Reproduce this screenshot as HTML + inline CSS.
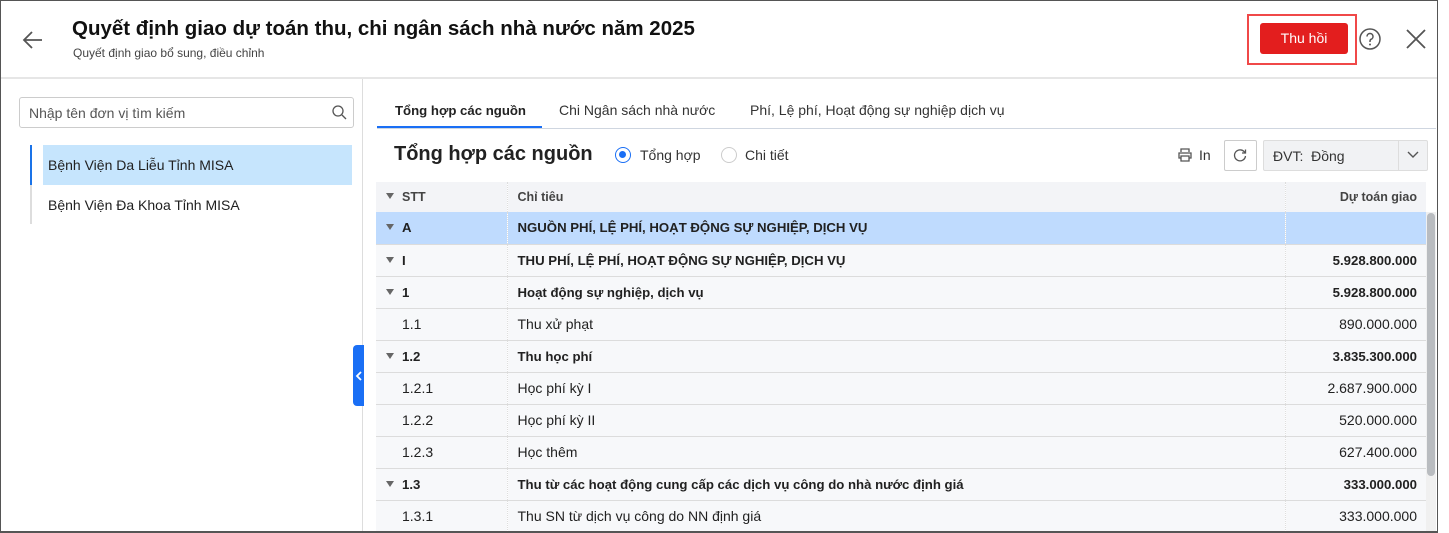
<!DOCTYPE html>
<html><head><meta charset="utf-8"><style>
*{box-sizing:border-box;margin:0;padding:0}
body{width:1449px;height:533px;background:#fff;font-family:"Liberation Sans","Noto Sans CJK SC",sans-serif;color:#212121;position:relative;overflow:hidden}
.frame{position:absolute;left:0;top:0;width:1438px;height:533px;overflow:hidden;background:#fff}
.bord{position:absolute;left:0;top:0;width:1438px;height:533px;border:1px solid #555;border-bottom:2px solid #555;pointer-events:none}
.abs{position:absolute}
.title{left:72px;top:17px;font-size:20.5px;font-weight:bold;color:#111}
.sub{left:73px;top:46px;font-size:12px;color:#444}
.hline{left:0;top:77px;width:1438px;height:2px;background:#e6e6e6}
.vline{left:362px;top:79px;width:1px;height:460px;background:#ddd}
.search{left:19px;top:97px;width:335px;height:31px;border:1px solid #ccc;border-radius:3px;font-size:14px;color:#555;padding:7px 9px}
.sel{left:43px;top:145px;width:309px;height:40px;background:#c6e5fd;font-size:14px;padding:12px 5px}
.item2{left:48px;top:197px;font-size:14px}
.lbar{left:30px;top:145px;width:2px;height:79px;background:#ddd}
.lbar2{left:30px;top:145px;width:2px;height:40px;background:#1a73e8}
.tab{top:102px;font-size:14px;color:#333}
table{position:absolute;left:376px;top:182px;width:1050px;border-collapse:collapse;font-size:14px;table-layout:fixed}
td{height:32px;border-bottom:1px solid #dcdcdc;background:#f7f8fa;padding:0 10px;white-space:nowrap;overflow:hidden}
td:nth-child(1){border-right:1px dotted #ddd}
td:nth-child(2){border-right:1px dotted #ddd}
td:nth-child(3){text-align:right;padding-right:9px}
tr.h td{background:#f3f4f7;height:30px;font-size:12.5px;font-weight:bold;color:#444;border-bottom:none}
tr.b td{font-weight:bold;font-size:13.2px}
tr.a td{background:#bfdbfe}
.tri{display:inline-block;width:0;height:0;border-left:4px solid transparent;border-right:4px solid transparent;border-top:6px solid #666;margin-right:8px;vertical-align:2px}
.ind{padding-left:26px!important}
</style></head><body>
<div class="frame">
<svg class="abs" style="left:22px;top:30px" width="22" height="20" viewBox="0 0 22 20"><path d="M20 10H3M10 2L2 10l8 8" fill="none" stroke="#555" stroke-width="1.8"/></svg>
<div class="abs title">Quyết định giao dự toán thu, chi ngân sách nhà nước năm 2025</div>
<div class="abs sub">Quyết định giao bổ sung, điều chỉnh</div>
<div class="abs" style="left:1247px;top:14px;width:110px;height:51px;border:2px solid #f04848"></div>
<div class="abs" style="left:1260px;top:23px;width:88px;height:31px;background:#e31e1e;border-radius:3px;color:#fff;font-size:14px;text-align:center;line-height:31px">Thu hồi</div>
<svg class="abs" style="left:1358px;top:27px" width="24" height="24" viewBox="0 0 24 24"><circle cx="12" cy="12" r="10" fill="none" stroke="#555" stroke-width="1.5"/><path d="M9 9.5a3 3 0 1 1 4 2.8c-.8.4-1 1-1 2v.7" fill="none" stroke="#555" stroke-width="1.5"/><circle cx="12" cy="17.5" r="1" fill="#555"/></svg>
<svg class="abs" style="left:1405px;top:28px" width="22" height="22" viewBox="0 0 22 22"><path d="M2 2L20 20M20 2L2 20" stroke="#555" stroke-width="1.8"/></svg>
<div class="abs hline"></div>
<div class="abs vline"></div>
<div class="abs search">Nhập tên đơn vị tìm kiếm</div>
<svg class="abs" style="left:331px;top:104px" width="16" height="16" viewBox="0 0 16 16"><circle cx="7" cy="7" r="5" fill="none" stroke="#555" stroke-width="1.3"/><path d="M11 11l4 4" stroke="#555" stroke-width="1.3"/></svg>
<div class="abs lbar"></div><div class="abs lbar2"></div>
<div class="abs sel">Bệnh Viện Da Liễu Tỉnh MISA</div>
<div class="abs item2">Bệnh Viện Đa Khoa Tỉnh MISA</div>
<div class="abs" style="left:353px;top:345px;width:11px;height:61px;background:#1a6ff5;border-radius:4px 0 0 4px"></div>
<svg class="abs" style="left:355px;top:370px" width="8" height="12" viewBox="0 0 8 12"><path d="M6 2L2 6l4 4" fill="none" stroke="#fff" stroke-width="1.8"/></svg>
<div class="abs tab" style="left:395px;font-weight:bold;color:#222;font-size:13.2px;top:103px">Tổng hợp các nguồn</div>
<div class="abs tab" style="left:559px">Chi Ngân sách nhà nước</div>
<div class="abs tab" style="left:750px">Phí, Lệ phí, Hoạt động sự nghiệp dịch vụ</div>
<div class="abs" style="left:377px;top:128px;width:1059px;height:1px;background:#cfd6e0"></div>
<div class="abs" style="left:377px;top:126px;width:165px;height:2px;background:#1a6ff5"></div>
<div class="abs" style="left:394px;top:143px;font-size:20px;font-weight:bold;color:#222">Tổng hợp các nguồn</div>
<div class="abs" style="left:615px;top:147px;width:16px;height:16px;border:1.5px solid #1a6ff5;border-radius:50%"><div style="margin:3px;width:7px;height:7px;border-radius:50%;background:#1a6ff5"></div></div>
<div class="abs" style="left:640px;top:147px;font-size:14px;color:#333">Tổng hợp</div>
<div class="abs" style="left:721px;top:147px;width:16px;height:16px;border:1px solid #ccc;border-radius:50%"></div>
<div class="abs" style="left:745px;top:147px;font-size:14px;color:#333">Chi tiết</div>
<svg class="abs" style="left:1177px;top:147px" width="16" height="16" viewBox="0 0 16 16"><path d="M4 5V2h8v3M4 11H2V6h12v5h-2M4 9h8v5H4z" fill="none" stroke="#555" stroke-width="1.3"/></svg>
<div class="abs" style="left:1199px;top:147px;font-size:14px;color:#333">In</div>
<div class="abs" style="left:1224px;top:140px;width:33px;height:31px;border:1px solid #ccc;border-radius:2px"></div>
<svg class="abs" style="left:1232px;top:147px" width="16" height="16" viewBox="0 0 16 16"><path d="M13 6A5.5 5.5 0 1 0 13.5 9M13.5 2.5V6H10" fill="none" stroke="#555" stroke-width="1.3"/></svg>
<div class="abs" style="left:1263px;top:140px;width:165px;height:31px;border:1px solid #ddd;background:#f1f2f4;border-radius:2px;font-size:14px;color:#333;padding:7px 9px">ĐVT:&nbsp; Đồng</div>
<div class="abs" style="left:1398px;top:141px;width:1px;height:29px;background:#ddd"></div>
<svg class="abs" style="left:1407px;top:151px" width="12" height="8" viewBox="0 0 12 8"><path d="M1 1l5 5 5-5" fill="none" stroke="#555" stroke-width="1.4"/></svg>
<table>
<colgroup><col style="width:131px"><col style="width:778px"><col style="width:141px"></colgroup>
<tr class="h"><td><span class="tri"></span>STT</td><td>Chỉ tiêu</td><td>Dự toán giao</td></tr>
<tr class="b a"><td><span class="tri"></span>A</td><td>NGUỒN PHÍ, LỆ PHÍ, HOẠT ĐỘNG SỰ NGHIỆP, DỊCH VỤ</td><td></td></tr>
<tr class="b"><td><span class="tri"></span>I</td><td>THU PHÍ, LỆ PHÍ, HOẠT ĐỘNG SỰ NGHIỆP, DỊCH VỤ</td><td>5.928.800.000</td></tr>
<tr class="b"><td><span class="tri"></span>1</td><td>Hoạt động sự nghiệp, dịch vụ</td><td>5.928.800.000</td></tr>
<tr><td class="ind">1.1</td><td>Thu xử phạt</td><td>890.000.000</td></tr>
<tr class="b"><td><span class="tri"></span>1.2</td><td>Thu học phí</td><td>3.835.300.000</td></tr>
<tr><td class="ind">1.2.1</td><td>Học phí kỳ I</td><td>2.687.900.000</td></tr>
<tr><td class="ind">1.2.2</td><td>Học phí kỳ II</td><td>520.000.000</td></tr>
<tr><td class="ind">1.2.3</td><td>Học thêm</td><td>627.400.000</td></tr>
<tr class="b"><td><span class="tri"></span>1.3</td><td>Thu từ các hoạt động cung cấp các dịch vụ công do nhà nước định giá</td><td>333.000.000</td></tr>
<tr><td class="ind">1.3.1</td><td>Thu SN từ dịch vụ công do NN định giá</td><td>333.000.000</td></tr>
</table>
<div class="abs" style="left:1426px;top:212px;width:10px;height:321px;background:#f0f0f0"></div>
<div class="abs" style="left:1427px;top:213px;width:8px;height:263px;background:#b9bcc0;border-radius:4px"></div>
<div class="bord"></div>
</div>
</body></html>
